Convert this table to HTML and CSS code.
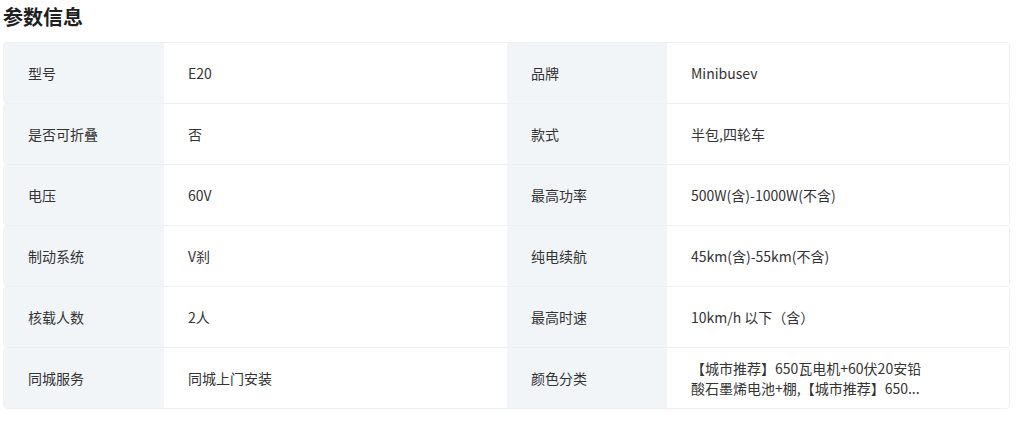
FILE: index.html
```html
<!DOCTYPE html>
<html lang="zh">
<head>
<meta charset="utf-8">
<link rel="stylesheet" href="styles.css">
</head>
<body>
<div class="page">
  <h2 class="title">参数信息</h2>
  <div class="table">
    <div class="row">
      <div class="label">型号</div><div class="value">E20</div>
      <div class="label">品牌</div><div class="value">Minibusev</div>
    </div>
    <div class="row">
      <div class="label">是否可折叠</div><div class="value">否</div>
      <div class="label">款式</div><div class="value">半包,四轮车</div>
    </div>
    <div class="row">
      <div class="label">电压</div><div class="value">60V</div>
      <div class="label">最高功率</div><div class="value">500W(含)-1000W(不含)</div>
    </div>
    <div class="row">
      <div class="label">制动系统</div><div class="value">V刹</div>
      <div class="label">纯电续航</div><div class="value">45km(含)-55km(不含)</div>
    </div>
    <div class="row">
      <div class="label">核载人数</div><div class="value">2人</div>
      <div class="label">最高时速</div><div class="value">10km/h 以下（含）</div>
    </div>
    <div class="row">
      <div class="label">同城服务</div><div class="value">同城上门安装</div>
      <div class="label">颜色分类</div><div class="value"><span class="multi">【城市推荐】650瓦电机+60伏20安铅<br>酸石墨烯电池+棚,【城市推荐】650...</span></div>
    </div>
  </div>
</div>
</body>
</html>
```
FILE: styles.css
```css
* { box-sizing: border-box; }
body {
  margin: 0;
  background: #fff;
  font-family: "Noto Sans CJK SC", "Noto Sans", "Liberation Sans", sans-serif;
  color: #333;
}
.page {
  padding: 0 3px;
}
.title {
  margin: 3px 0 11px;
  font-size: 20px;
  line-height: 28px;
  font-weight: 700;
  color: #1f1f1f;
}
.table {
  width: 1007px;
  display: flex;
  flex-direction: column;
}
.row {
  display: grid;
  grid-template-columns: 160px 343px 160px 1fr;
  height: 62px;
  border: 1px solid #eff0f2;
  border-radius: 4px;
  overflow: hidden;
}
.row + .row {
  margin-top: -1px;
}
.label, .value {
  display: flex;
  align-items: center;
  padding: 0 24px;
  font-size: 14px;
  line-height: 20px;
}
.label {
  background: #f2f5f8;
  color: #333;
}
.value {
  background: #fff;
  color: #333;
}
.multi {
  display: block;
  white-space: nowrap;
}
```
